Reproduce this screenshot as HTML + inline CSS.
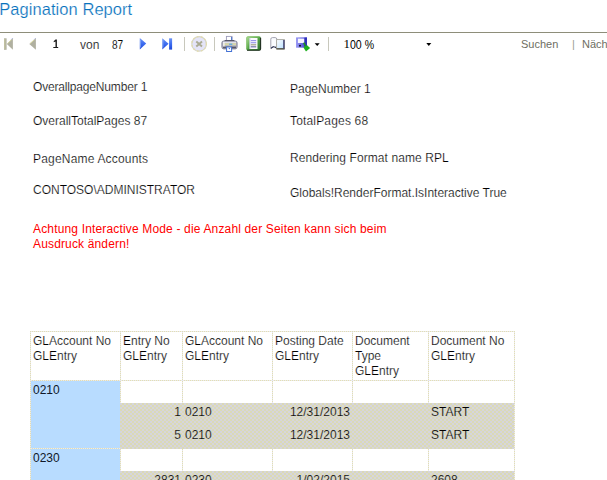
<!DOCTYPE html>
<html>
<head>
<meta charset="utf-8">
<style>
html,body{margin:0;padding:0;background:#fff;width:607px;height:480px;overflow:hidden;position:relative;font-family:"Liberation Sans",sans-serif;}
.a{position:absolute;white-space:pre;line-height:1;}
#title{left:-0.7px;top:1px;font-size:16.5px;color:#0872bd;-webkit-text-stroke:0.22px #ffffff;letter-spacing:0.05px;}
#rule{position:absolute;left:0;top:32px;width:607px;height:1px;background:#8e8e7a;}
.tb{font-size:11px;color:#000;}
.sep{position:absolute;top:37px;width:1px;height:14px;background:#c8c8bc;}
.rep{font-size:12px;color:#000;-webkit-text-stroke:0.2px #ffffff;}
.red{color:#ff0000;-webkit-text-stroke:0;}
table{border-collapse:collapse;}
.dot-h{position:absolute;height:1px;background:repeating-linear-gradient(90deg,#e4e0b0 0 1px,#e8e8f0 1px 2px);}
.dot-v{position:absolute;width:1px;background:repeating-linear-gradient(180deg,#e4e0b0 0 1px,#e8e8f0 1px 2px);}
.blue{position:absolute;background:#b8dcff;}
.gray{position:absolute;background-color:#d9d8c9;background-image:repeating-conic-gradient(#dbd9b6 0% 25%,#d6d6dc 0% 50%);background-size:4px 4px;}
</style>
</head>
<body>
<div class="a" id="title">Pagination Report</div>
<div id="rule"></div>

<!-- toolbar -->
<svg style="position:absolute;left:0;top:0" width="607" height="56">
  <defs>
    <linearGradient id="gblue" x1="0" y1="0" x2="0" y2="1">
      <stop offset="0" stop-color="#6a92f4"/><stop offset="0.5" stop-color="#3c6cf0"/><stop offset="1" stop-color="#1e48d8"/>
    </linearGradient>
    <linearGradient id="ggreen" x1="0" y1="0" x2="1" y2="1">
      <stop offset="0" stop-color="#b8e0a0"/><stop offset="0.45" stop-color="#58a848"/><stop offset="1" stop-color="#2c6c30"/>
    </linearGradient>
    <linearGradient id="gsave" x1="0" y1="0" x2="1" y2="0">
      <stop offset="0" stop-color="#9c9cf4"/><stop offset="1" stop-color="#3838d0"/>
    </linearGradient>
    <linearGradient id="gbook" x1="0" y1="0" x2="1" y2="1">
      <stop offset="0" stop-color="#ffffff"/><stop offset="1" stop-color="#b8e0ff"/>
    </linearGradient>
  </defs>
  <!-- first page (disabled) -->
  <rect x="4" y="38.3" width="2.6" height="11.5" fill="#b0b0a0"/>
  <rect x="4.3" y="39" width="1" height="10" fill="#c8c8a0"/>
  <polygon points="12.9,38 6.8,44 12.9,49.8" fill="#b0b0a0"/>
  <line x1="12.6" y1="38.6" x2="7.6" y2="43.6" stroke="#d8d8a0" stroke-width="0.9"/>
  <line x1="12.6" y1="38.2" x2="11.3" y2="39.5" stroke="#a0a8f0" stroke-width="0.9"/>
  <!-- page number 1 -->
  <path d="M55.5 39.5 L56.9 39.5 L56.9 47.2 L55.5 47.2 L55.5 41.4 L53.7 42.3 L53.7 41.2 Z" fill="#1a1a1a"/>
  <rect x="53.3" y="47" width="4.9" height="1" fill="#1a1a1a"/>
  <!-- prev (disabled) -->
  <polygon points="35.9,38 29.3,44 35.9,49.8" fill="#b0b0a0"/>
  <line x1="35.6" y1="38.6" x2="30.1" y2="43.6" stroke="#d8d8a0" stroke-width="0.9"/>
  <line x1="35.6" y1="38.2" x2="34.3" y2="39.5" stroke="#a0a8f0" stroke-width="0.9"/>
  <!-- next -->
  <polygon points="139.8,38 146.2,43.6 139.8,49.6" fill="url(#gblue)"/>
  <line x1="140.4" y1="39.5" x2="140.4" y2="47.5" stroke="#90b0f8" stroke-width="0.8"/>
  <!-- last -->
  <polygon points="162.3,38.3 168.6,43.8 162.3,49.6" fill="url(#gblue)"/>
  <line x1="162.9" y1="39.8" x2="162.9" y2="47.5" stroke="#90b0f8" stroke-width="0.8"/>
  <rect x="169.1" y="38.3" width="3" height="11.3" fill="url(#gblue)"/>
  <!-- stop -->
  <circle cx="199.1" cy="43.9" r="7.3" fill="#e4e4f8" stroke="#d6d6c6" stroke-width="1.2"/>
  <circle cx="199.1" cy="43.9" r="7.3" fill="none" stroke="#e4dca8" stroke-width="1.2" stroke-dasharray="1.5 2.5"/>
  <path d="M196.3 41.5 L202 46.5 M202 41.5 L196.3 46.5" stroke="#aaaa92" stroke-width="1.9"/>
  <!-- printer -->
  <rect x="226.4" y="36.4" width="5.6" height="5" fill="#fff" stroke="#9a9ab8" stroke-width="0.9"/>
  <line x1="231.7" y1="37" x2="231.7" y2="41" stroke="#3868c8" stroke-width="1"/>
  <rect x="224.6" y="40" width="9.8" height="1.3" fill="#383848"/>
  <rect x="221.9" y="41" width="15.2" height="7.9" rx="1.8" fill="#b4b4c0" stroke="#7c7c94" stroke-width="0.9"/>
  <rect x="223" y="41.8" width="13" height="1.4" fill="#e0e0ec"/>
  <rect x="223" y="43.2" width="13" height="2" fill="#d8d8a8"/>
  <rect x="223.2" y="42" width="1.4" height="5" fill="#f0f0f4"/>
  <rect x="229.1" y="43.6" width="3.2" height="1.3" fill="#58a8ec"/>
  <rect x="223" y="46.6" width="13" height="1.7" fill="#585868"/>
  <rect x="226.6" y="47" width="5" height="4.5" fill="#fff" stroke="#4472d4" stroke-width="1"/>
  <circle cx="229.3" cy="48.6" r="0.7" fill="#3060e0"/>
  <!-- page (green) -->
  <rect x="246.2" y="36.3" width="14.6" height="14.3" rx="1.8" fill="url(#ggreen)"/>
  <path d="M247 50.2 L259.2 50.2 Q260.6 50.2 260.6 48.8 L260.6 37.8" fill="none" stroke="#223022" stroke-width="1.1"/>
  <path d="M246.8 48.5 L246.8 38 Q246.8 36.8 248 36.8 L259 36.8" fill="none" stroke="#90c878" stroke-width="0.9"/>
  <rect x="249.6" y="38" width="7.9" height="11" fill="#fcfcff"/>
  <rect x="249.6" y="38" width="0.8" height="11" fill="#c8c8f0"/>
  <rect x="250.8" y="40" width="5.4" height="1.2" fill="#9898ec"/>
  <rect x="250.8" y="42.1" width="5.4" height="1.2" fill="#9898ec"/>
  <rect x="250.8" y="44.2" width="5.4" height="1.2" fill="#a0a088"/>
  <rect x="250.8" y="46.2" width="5.4" height="1.2" fill="#7070a8"/>
  <!-- book -->
  <path d="M270.8 48.3 L270.8 39.2 Q270.8 37.6 272.4 37.6 L275.2 37.6 Q276.8 37.6 276.8 39.2 L276.8 48.3 Q275.6 46.6 273.8 46.6 Q272 46.6 270.8 48.3 Z" fill="#fafcff" stroke="#9a9aa8" stroke-width="0.9"/>
  <path d="M271 48.5 Q272.5 46.5 274 46.7 Q275.6 46.7 276.8 48.5" fill="none" stroke="#202848" stroke-width="1.1"/>
  <rect x="276.6" y="39.6" width="7.8" height="9.2" fill="url(#gbook)" stroke="#a8a8a0" stroke-width="0.9"/>
  <line x1="276.4" y1="48.9" x2="284.6" y2="48.9" stroke="#303020" stroke-width="1.1"/>
  <rect x="283.2" y="40" width="1.4" height="8.6" fill="#404070"/>
  <!-- save -->
  <rect x="296" y="37.4" width="11" height="10.3" fill="url(#gsave)"/>
  <rect x="297.9" y="38.6" width="6.5" height="4.4" fill="#f6f6ff"/>
  <rect x="304.5" y="37.6" width="2.4" height="9" fill="#3030b8"/>
  <circle cx="300" cy="45.7" r="1.05" fill="#101020"/>
  <path d="M303.8 42.6 L305.6 46.6" stroke="#1c8c28" stroke-width="1.7"/>
  <polygon points="303.4,47.4 307.1,45.3 310.1,48.1 306,51.5" fill="#1eb01e"/>
  <polygon points="314.7,43.3 319.7,43.3 317.2,46" fill="#000"/>
  <!-- zoom caret -->
  <polygon points="426.3,43 431.3,43 428.8,45.9" fill="#000"/>
</svg>
<div class="sep" style="left:184px"></div>
<div class="sep" style="left:214px"></div>
<div class="sep" style="left:328px"></div>


<div class="a tb" style="left:80px;top:39px;font-size:12px;-webkit-text-stroke:0.2px #fff;">von</div>
<div class="a tb" style="left:112px;top:39px;font-size:12px;transform:scaleX(0.84);transform-origin:0 0;-webkit-text-stroke:0.1px #fff;">87</div>
<div class="a tb" style="left:343.5px;top:37px;font-size:13px;font-family:'Liberation Serif',serif;">1</div><div class="a tb" style="left:350px;top:39px;font-size:12px;transform:scaleX(0.88);transform-origin:0 0;">00 %</div>
<div class="a tb" style="left:521px;top:39px;color:#6e6e62;">Suchen</div>
<div class="a tb" style="left:572px;top:39px;color:#9c9c90;">|</div>
<div class="a tb" style="left:582px;top:39px;color:#6e6e62;">Nächste</div>

<!-- report text -->
<div class="a rep" style="left:33px;top:81px;letter-spacing:-0.17px;">OverallpageNumber 1</div>
<div class="a rep" style="left:33px;top:115px;">OverallTotalPages 87</div>
<div class="a rep" style="left:33px;top:153px;letter-spacing:0.19px;">PageName Accounts</div>
<div class="a rep" style="left:33px;top:184px;">CONTOSO\ADMINISTRATOR</div>
<div class="a rep" style="left:290px;top:83px;">PageNumber 1</div>
<div class="a rep" style="left:290px;top:115px;letter-spacing:0.17px;">TotalPages 68</div>
<div class="a rep" style="left:290px;top:152px;letter-spacing:0.08px;">Rendering Format name RPL</div>
<div class="a rep" style="left:290px;top:187px;">Globals!RenderFormat.IsInteractive True</div>
<div class="a rep red" style="left:33px;top:223px;letter-spacing:0.16px;">Achtung Interactive Mode - die Anzahl der Seiten kann sich beim</div>
<div class="a rep red" style="left:33px;top:238px;letter-spacing:0.15px;">Ausdruck ändern!</div>

<!-- table -->
<div class="blue" style="left:31px;top:381px;width:89px;height:67px;"></div>
<div class="blue" style="left:31px;top:449px;width:89px;height:31px;"></div>
<div class="gray" style="left:120px;top:403px;width:395px;height:46px;"></div>
<div class="gray" style="left:120px;top:471px;width:395px;height:9px;"></div>

<div class="dot-h" style="left:30px;top:331px;width:485px;"></div>
<div class="dot-h" style="left:30px;top:380px;width:485px;"></div>
<div class="dot-h" style="left:30px;top:448px;width:90px;"></div>
<div class="dot-v" style="left:30px;top:331px;height:149px;"></div>
<div class="dot-v" style="left:120px;top:331px;height:72px;"></div>
<div class="dot-v" style="left:120px;top:449px;height:22px;"></div>
<div class="dot-v" style="left:182px;top:331px;height:72px;"></div>
<div class="dot-v" style="left:182px;top:449px;height:22px;"></div>
<div class="dot-v" style="left:272px;top:331px;height:72px;"></div>
<div class="dot-v" style="left:272px;top:449px;height:22px;"></div>
<div class="dot-v" style="left:352px;top:331px;height:72px;"></div>
<div class="dot-v" style="left:352px;top:449px;height:22px;"></div>
<div class="dot-v" style="left:428px;top:331px;height:72px;"></div>
<div class="dot-v" style="left:428px;top:449px;height:22px;"></div>
<div class="dot-v" style="left:514px;top:331px;height:149px;"></div>

<div class="a rep" style="left:33px;top:334px;line-height:15px;">GLAccount No
GLEntry</div>
<div class="a rep" style="left:123px;top:334px;line-height:15px;">Entry No
GLEntry</div>
<div class="a rep" style="left:185px;top:334px;line-height:15px;">GLAccount No
GLEntry</div>
<div class="a rep" style="left:275px;top:334px;line-height:15px;">Posting Date
GLEntry</div>
<div class="a rep" style="left:355px;top:334px;line-height:15px;">Document
Type
GLEntry</div>
<div class="a rep" style="left:431px;top:334px;line-height:15px;">Document No
GLEntry</div>

<div class="a rep" style="left:33px;top:384px;-webkit-text-stroke:0;color:#101828;">0210</div>
<div class="a rep" style="left:33px;top:452px;-webkit-text-stroke:0;color:#101828;">0230</div>

<div class="a rep" style="-webkit-text-stroke:0.2px #d8d8ca;left:120px;top:406px;width:61px;text-align:right;">1</div>
<div class="a rep" style="-webkit-text-stroke:0.2px #d8d8ca;left:185px;top:406px;">0210</div>
<div class="a rep" style="-webkit-text-stroke:0.2px #d8d8ca;left:272px;top:406px;width:78px;text-align:right;">12/31/2013</div>
<div class="a rep" style="-webkit-text-stroke:0.2px #d8d8ca;left:431px;top:406px;">START</div>
<div class="a rep" style="-webkit-text-stroke:0.2px #d8d8ca;left:120px;top:429px;width:61px;text-align:right;">5</div>
<div class="a rep" style="-webkit-text-stroke:0.2px #d8d8ca;left:185px;top:429px;">0210</div>
<div class="a rep" style="-webkit-text-stroke:0.2px #d8d8ca;left:272px;top:429px;width:78px;text-align:right;">12/31/2013</div>
<div class="a rep" style="-webkit-text-stroke:0.2px #d8d8ca;left:431px;top:429px;">START</div>

<div class="a rep" style="-webkit-text-stroke:0.2px #d8d8ca;left:120px;top:474px;width:61px;text-align:right;">2831</div>
<div class="a rep" style="-webkit-text-stroke:0.2px #d8d8ca;left:185px;top:474px;">0230</div>
<div class="a rep" style="-webkit-text-stroke:0.2px #d8d8ca;left:272px;top:474px;width:78px;text-align:right;">1/02/2015</div>
<div class="a rep" style="-webkit-text-stroke:0.2px #d8d8ca;left:431px;top:474px;">2608</div>
</body>
</html>
